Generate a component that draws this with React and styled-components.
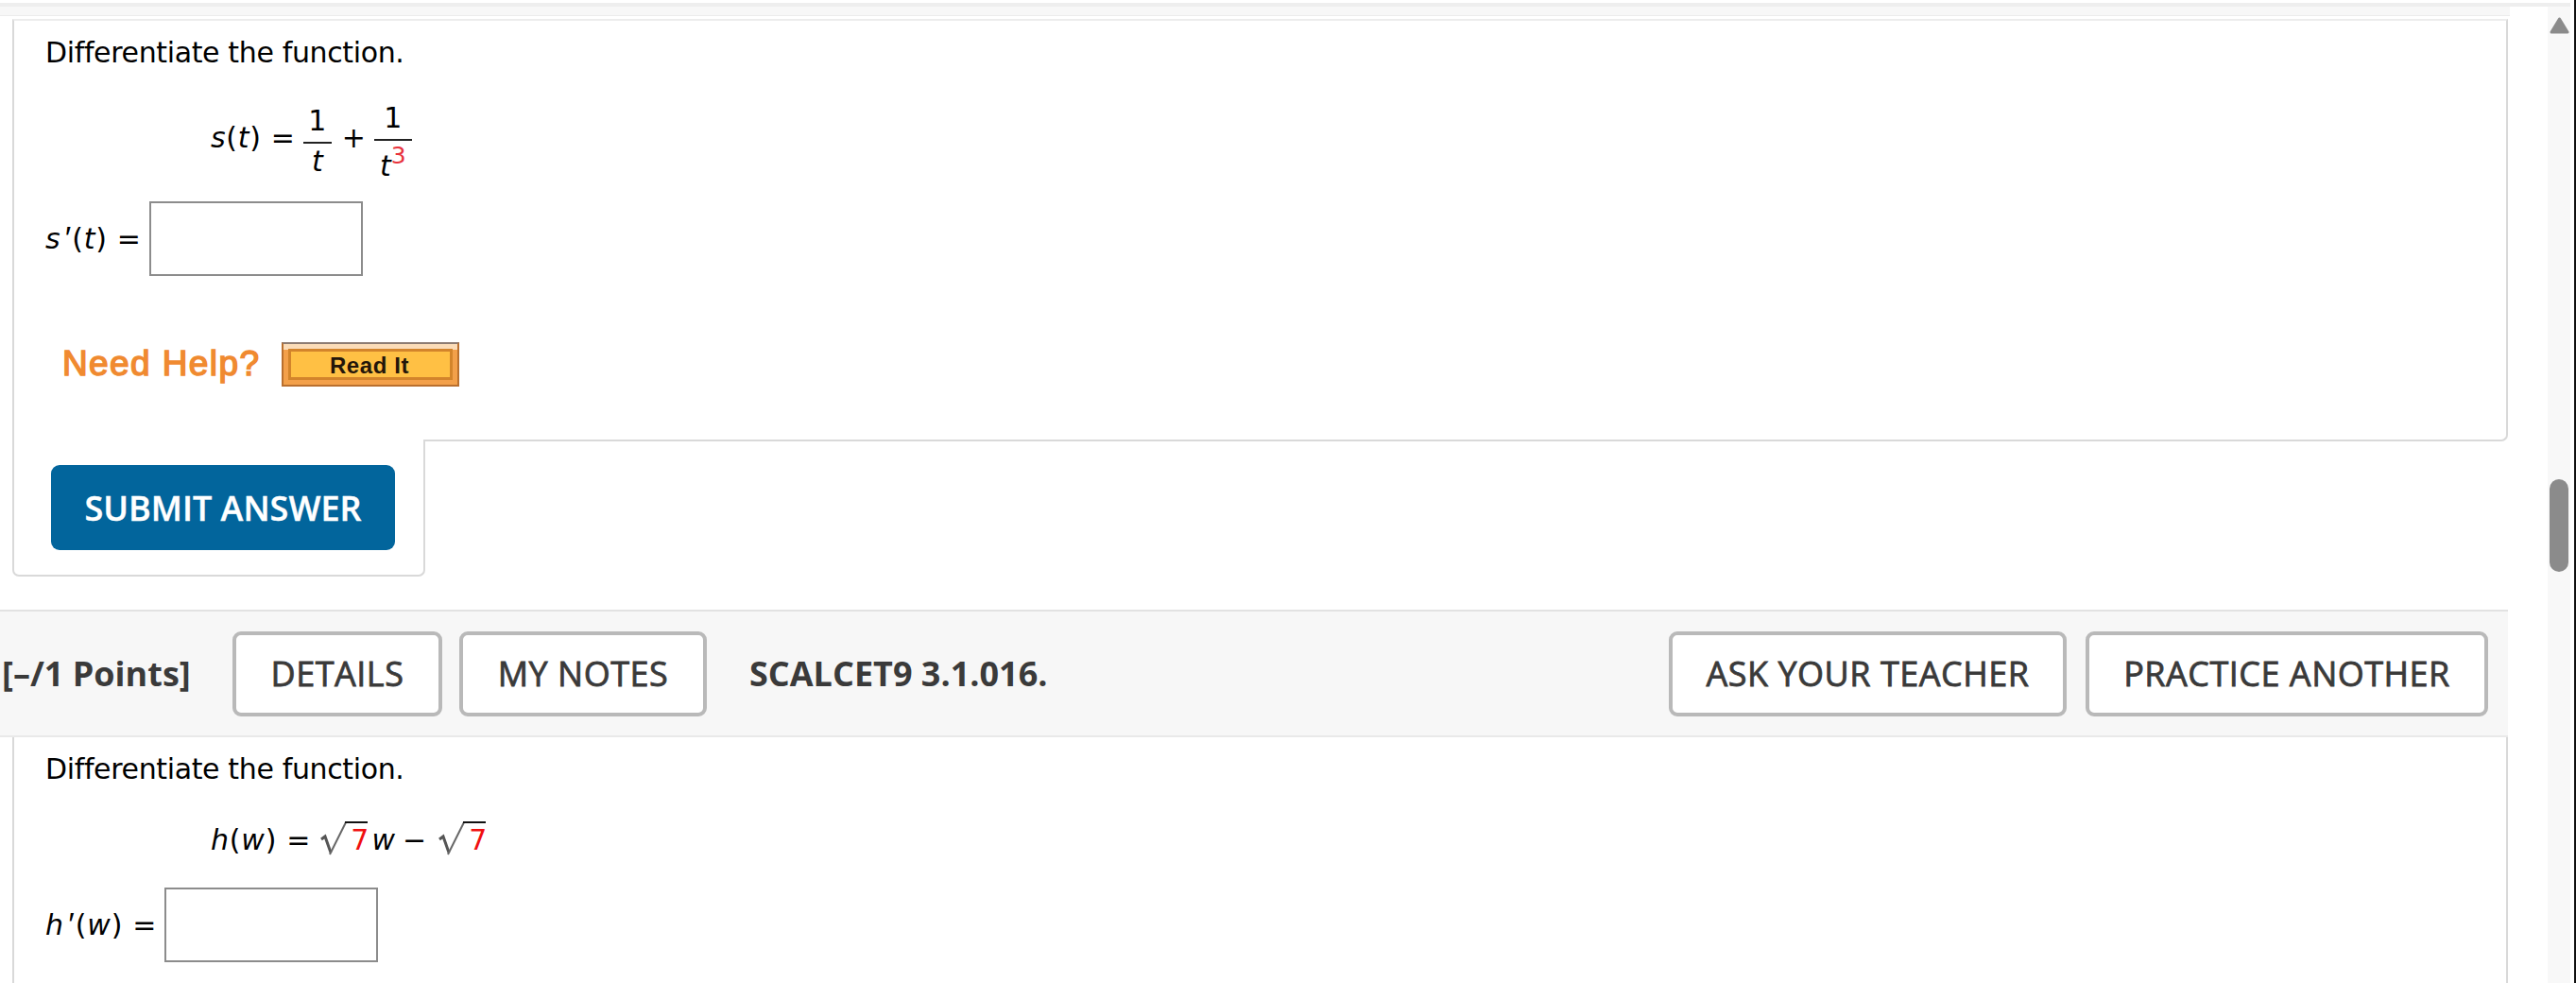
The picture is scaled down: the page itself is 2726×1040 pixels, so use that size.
import styled, { createGlobalStyle } from 'styled-components';

const GlobalStyle = createGlobalStyle`
	* {
		box-sizing: border-box;
	}

	body {
		margin: 0;
		background: #fff;
		color: #000;
		font-family: 'DejaVu Sans', Verdana, sans-serif;
		font-size: 30px;
		overflow: hidden;
	}
`;

const Window = styled.div`
	width: 2726px;
	height: 1040px;
	padding-top: 3px;
	border-right: 2px solid #111;
	overflow: hidden;
`;

const TopLine = styled.div`
	width: 2720px;
	height: 4px;
	background: #eeeeee;
`;

const Page = styled.div`
	display: flex;
	height: 1033px;
`;

const Content = styled.main`
	width: 2696px;
	display: flex;
	flex-direction: column;
	align-items: flex-start;
`;

const TopStrip = styled.div`
	width: 2656px;
	height: 10px;
	background: #f7f7f7;
	border-bottom: 1px solid #ececec;
`;

const QuestionBody = styled.section`
	width: 2641px;
	height: ${(props) => props.$height}px;
	margin-left: 13px;
	padding: ${(props) => props.$top}px 0 0 33px;
	border: 2px solid #d9d9d9;
	border-top: ${(props) => (props.$open ? '0' : '2px solid #ececec')};
	border-bottom: ${(props) => (props.$open ? '0' : '2px solid #d9d9d9')};
	border-radius: ${(props) => (props.$open ? '0' : '0 0 7px 0')};
	margin-top: ${(props) => (props.$open ? '0' : '3px')};
`;

const Prompt = styled.p`
	margin: 0;
	line-height: 36px;
	height: 36px;
	letter-spacing: -0.36px;
`;

const Formula = styled.div`
	display: flex;
	align-items: flex-start;
	line-height: 36px;
	padding-left: 175px;
	margin-top: ${(props) => props.$top}px;
	height: ${(props) => props.$height}px;
`;

const Term = styled.span`
	white-space: pre;
	font-style: ${(props) => (props.$upright ? 'normal' : 'italic')};
	margin-left: ${(props) => props.$gap || 0}px;
	margin-top: ${(props) => props.$drop || 0}px;
	letter-spacing: ${(props) => props.$spacing || 0}px;
	color: ${(props) => (props.$red ? '#f01010' : 'inherit')};
`;

const Paren = styled.span`
	font-style: normal;
`;

const Prime = styled.span`
	display: inline-block;
	width: 12px;
	padding-left: 3px;
	font-family: 'Liberation Sans', Arial, sans-serif;
	font-size: 34px;
	line-height: 30px;
`;

const Fraction = styled.span`
	width: ${(props) => props.$width}px;
	margin-left: ${(props) => props.$gap}px;
	margin-top: ${(props) => props.$drop || 0}px;
	display: flex;
	flex-direction: column;
	text-align: center;
	line-height: 30px;
`;

const Numerator = styled.span`
	padding-bottom: 7px;
	border-bottom: 2px solid #222;
`;

const Denominator = styled.span`
	margin-top: ${(props) => props.$top}px;
	height: 30px;
	display: flex;
	justify-content: center;
	font-style: italic;
`;

const Power = styled.span`
	color: #e8323c;
	font-size: 25px;
	font-style: normal;
	margin: -11px 0 0 0;
`;

const Radical = styled.svg`
	width: 52px;
	height: 38px;
	margin-left: ${(props) => props.$gap}px;
	margin-right: -20px;
	overflow: visible;
`;

const AnswerRow = styled.label`
	display: flex;
	align-items: flex-start;
	height: 79px;
	line-height: 36px;
	margin-top: ${(props) => props.$top}px;
`;

const AnswerInput = styled.input`
	width: 226px;
	height: 79px;
	margin: 0 0 0 ${(props) => props.$gap}px;
	border: 2px solid #8c8c8c;
	border-radius: 0;
	background: #fff;
	outline: none;
`;

const HelpRow = styled.div`
	display: flex;
	align-items: center;
	height: 47px;
	margin-top: 70px;
	padding-left: 18px;
`;

const HelpLabel = styled.span`
	width: 232px;
	font-family: 'Liberation Sans', Arial, sans-serif;
	font-size: 37px;
	line-height: 46px;
	letter-spacing: 1.4px;
	color: #f08a30;
	-webkit-text-stroke: 1.5px #f08a30;
`;

const ReadButton = styled.button`
	width: 188px;
	height: 47px;
	padding: 0;
	border: 2px solid #b96f2e;
	border-top-color: #8d7c72;
	background: linear-gradient(#fbdcb8 0 6px, #f3a04a 6px);
	display: flex;
	align-items: center;
	justify-content: center;
	cursor: pointer;
`;

const ReadFace = styled.span`
	width: 174px;
	height: 33px;
	padding-right: 2px;
	border: 3px solid #d3842b;
	background: #ffc044;
	font: bold 24px/29px 'Liberation Sans', Arial, sans-serif;
	letter-spacing: 0.6px;
	color: #24160a;
`;

const SubmitPanel = styled.div`
	width: 437px;
	height: 146px;
	margin: -2px 0 0 13px;
	padding: 27px 0 0 39px;
	background: #fff;
	border: 2px solid #d9d9d9;
	border-top: 0;
	border-radius: 0 0 7px 7px;
`;

const SubmitButton = styled.button`
	width: 364px;
	height: 90px;
	padding: 2px 0 0;
	border: 0;
	border-radius: 9px;
	background: #02659c;
	color: #fff;
	font: 600 36px/48px 'Open Sans', sans-serif;
	-webkit-text-stroke: 0.4px #fff;
	cursor: pointer;
`;

const QuestionHeader = styled.header`
	width: 2654px;
	height: 135px;
	margin-top: 35px;
	display: flex;
	align-items: center;
	padding: 0 21px 0 2px;
	background: #f7f7f7;
	border-top: 2px solid #e2e2e2;
	border-bottom: 2px solid #e9e9e9;
	font-family: 'Open Sans', sans-serif;
	color: #3a3a3a;
`;

const Points = styled.strong`
	width: 244px;
	font-size: 36px;
	font-weight: 700;
	white-space: nowrap;
`;

const QuestionCode = styled.strong`
	flex: 1;
	margin-left: 45px;
	font-size: 36px;
	font-weight: 700;
`;

const ButtonGroup = styled.div`
	display: flex;
	gap: ${(props) => props.$gap}px;
`;

const OutlineButton = styled.button`
	width: ${(props) => props.$width}px;
	height: 90px;
	padding: 0;
	border: 4px solid #b9b9b9;
	border-radius: 9px;
	background: #fff;
	color: #3a3a3a;
	font: 500 36px/48px 'Open Sans', sans-serif;
	letter-spacing: 0.5px;
	-webkit-text-stroke: 0.8px #3a3a3a;
	white-space: nowrap;
	cursor: pointer;
`;

const Scrollbar = styled.aside`
	width: 24px;
	padding: 11px 0 0 2px;
	background: #f8f8f8;
`;

const ScrollArrow = styled.svg`
	display: block;
	width: 21px;
	height: 18px;
`;

const ScrollThumb = styled.div`
	width: 20px;
	height: 98px;
	margin-top: 471px;
	border-radius: 10px;
	background: #8b8b8b;
`;

const SquareRoot = ({ gap }) => (
	<Radical $gap={gap} viewBox="0 0 52 38" fill="none">
		<path d="M1 20l4-3 6 17" stroke="#555" strokeWidth="3" />
		<path d="M10 36L27 2" stroke="#666" strokeWidth="2" />
		<path d="M26 2h24" stroke="#111" strokeWidth="2" />
	</Radical>
);

const App = () => {
	return (
		<Window>
			<GlobalStyle />
			<TopLine />
			<Page>
				<Content>
					<TopStrip />
					<QuestionBody $height={447} $top={16}>
						<Prompt>Differentiate the function.</Prompt>
						<Formula $top={36} $height={82}>
							<Term $drop={18} $spacing={0.7}>
								s<Paren>(</Paren>t<Paren>)</Paren>
							</Term>
							<Term $upright $gap={10} $drop={18}>=</Term>
							<Fraction $gap={9} $width={30} $drop={3}>
								<Numerator>1</Numerator>
								<Denominator $top={4}>t</Denominator>
							</Fraction>
							<Term $upright $gap={11} $drop={18}>+</Term>
							<Fraction $gap={9} $width={40}>
								<Numerator>1</Numerator>
								<Denominator $top={12}>
									t<Power>3</Power>
								</Denominator>
							</Fraction>
						</Formula>
						<AnswerRow $top={21}>
							<Term $drop={22} $spacing={0.7}>
								s<Prime>′</Prime>
								<Paren>(</Paren>t<Paren>)</Paren>
							</Term>
							<Term $upright $gap={10} $drop={22}>=</Term>
							<AnswerInput $gap={9} />
						</AnswerRow>
						<HelpRow>
							<HelpLabel>Need Help?</HelpLabel>
							<ReadButton>
								<ReadFace>Read It</ReadFace>
							</ReadButton>
						</HelpRow>
					</QuestionBody>
					<SubmitPanel>
						<SubmitButton>SUBMIT ANSWER</SubmitButton>
					</SubmitPanel>
					<QuestionHeader>
						<Points>[–/1 Points]</Points>
						<ButtonGroup $gap={18}>
							<OutlineButton $width={222}>DETAILS</OutlineButton>
							<OutlineButton $width={262}>MY NOTES</OutlineButton>
						</ButtonGroup>
						<QuestionCode>SCALCET9 3.1.016.</QuestionCode>
						<ButtonGroup $gap={20}>
							<OutlineButton $width={421}>ASK YOUR TEACHER</OutlineButton>
							<OutlineButton $width={426}>PRACTICE ANOTHER</OutlineButton>
						</ButtonGroup>
					</QuestionHeader>
					<QuestionBody $open $height={260} $top={16}>
						<Prompt>Differentiate the function.</Prompt>
						<Formula $top={36} $height={39}>
							<Term $drop={3} $spacing={0.8}>
								h<Paren>(</Paren>w<Paren>)</Paren>
							</Term>
							<Term $upright $gap={10} $drop={3}>=</Term>
							<SquareRoot gap={11} />
							<Term $upright $red $drop={3}>7</Term>
							<Term $gap={3} $drop={3}>w</Term>
							<Term $upright $gap={8} $drop={3}>−</Term>
							<SquareRoot gap={13} />
							<Term $upright $red $drop={3}>7</Term>
						</Formula>
						<AnswerRow $top={32}>
							<Term $drop={22} $spacing={0.8}>
								h<Prime>′</Prime>
								<Paren>(</Paren>w<Paren>)</Paren>
							</Term>
							<Term $upright $gap={10} $drop={22}>=</Term>
							<AnswerInput $gap={9} />
						</AnswerRow>
					</QuestionBody>
				</Content>
				<Scrollbar>
					<ScrollArrow viewBox="0 0 21 18">
						<path d="M10.500 2L19 16H2Z" fill="#8b8b8b" stroke="#8b8b8b" strokeWidth="3" strokeLinejoin="round" />
					</ScrollArrow>
					<ScrollThumb />
				</Scrollbar>
			</Page>
		</Window>
	);
};

export default App;
